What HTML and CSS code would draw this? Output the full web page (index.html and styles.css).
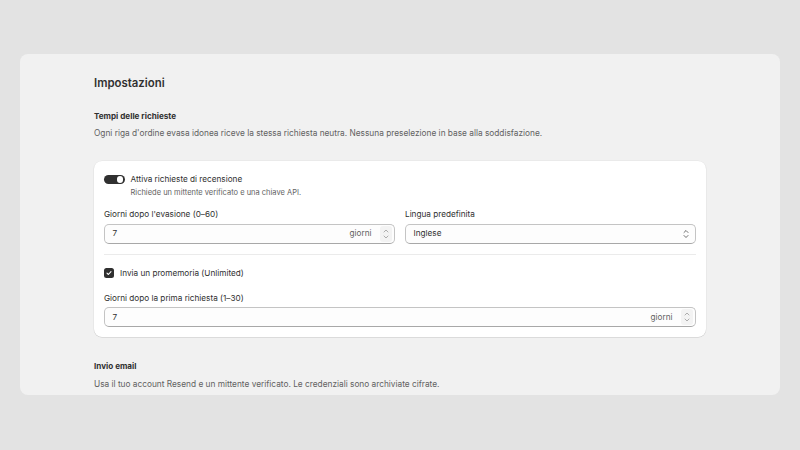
FILE: index.html
```html
<!DOCTYPE html>
<html lang="it">
<head>
    <meta charset="UTF-8">
    <meta name="viewport" content="width=device-width, initial-scale=1.0">
    <title>Impostazioni</title>
    <link rel="stylesheet" href="styles.css">
</head>
<body>
    <div class="panel">
        <h1 class="page-title">Impostazioni</h1>

        <section class="section">
            <h2 class="section-title">Tempi delle richieste</h2>
            <p class="section-desc">Ogni riga d'ordine evasa idonea riceve la stessa richiesta neutra. Nessuna preselezione in base alla soddisfazione.</p>

            <div class="card">
                <div class="toggle-row">
                    <span class="toggle"><span class="knob"></span></span>
                    <div>
                        <div class="toggle-label">Attiva richieste di recensione</div>
                        <div class="help">Richiede un mittente verificato e una chiave API.</div>
                    </div>
                </div>

                <div class="field-grid">
                    <div class="field">
                        <label>Giorni dopo l'evasione (0–60)</label>
                        <div class="input">
                            <span class="value">7</span>
                            <span class="suffix">giorni</span>
                            <span class="stepper">
                                <svg width="8" height="14" viewBox="0 0 8 14"><path d="M2 5 4 3 6 5M2 9 4 11 6 9" fill="none" stroke="#9a9a9a" stroke-width="0.8" stroke-linecap="round" stroke-linejoin="round"/></svg>
                            </span>
                        </div>
                    </div>
                    <div class="field">
                        <label>Lingua predefinita</label>
                        <div class="input">
                            <span class="value">Inglese</span>
                            <svg class="select-icon" width="8" height="12" viewBox="0 0 8 12"><path d="M2 4.5 4 2.5 6 4.5M2 7.5 4 9.5 6 7.5" fill="none" stroke="#4a4a4a" stroke-width="0.8" stroke-linecap="round" stroke-linejoin="round"/></svg>
                        </div>
                    </div>
                </div>

                <hr class="divider">

                <div class="check-row">
                    <span class="checkbox">
                        <svg width="8" height="8" viewBox="0 0 8 8"><path d="M2 4.2 3.4 5.5 6 2.6" fill="none" stroke="#fff" stroke-width="1.1" stroke-linecap="round" stroke-linejoin="round"/></svg>
                    </span>
                    <span>Invia un promemoria (Unlimited)</span>
                </div>

                <div class="field field-wide">
                    <label>Giorni dopo la prima richiesta (1–30)</label>
                    <div class="input">
                        <span class="value">7</span>
                        <span class="suffix">giorni</span>
                        <span class="stepper">
                            <svg width="8" height="14" viewBox="0 0 8 14"><path d="M2 5 4 3 6 5M2 9 4 11 6 9" fill="none" stroke="#9a9a9a" stroke-width="0.8" stroke-linecap="round" stroke-linejoin="round"/></svg>
                        </span>
                    </div>
                </div>
            </div>
        </section>

        <section class="section section-email">
            <h2 class="section-title">Invio email</h2>
            <p class="section-desc">Usa il tuo account Resend e un mittente verificato. Le credenziali sono archiviate cifrate.</p>
        </section>
    </div>
</body>
</html>
```

FILE: styles.css
```css
:root {
    --text: #303030;
    --muted: #616161;
    --page: #e3e3e3;
    --panel: #f1f1f1;
    --border: #c4c4c4;
}
* {
    box-sizing: border-box;
}
body {
    margin: 0;
    padding: 54px 20px 0;
    background: var(--page);
    font-family: 'Inter', 'Noto Sans', sans-serif;
    font-size: 8.2px;
    line-height: 12.5px;
    color: var(--text);
}
.panel {
    height: 341px;
    overflow: hidden;
    background: var(--panel);
    border-radius: 8px;
    padding: 21px 74px 0;
}
.page-title {
    margin: 0;
    font-size: 11.4px;
    line-height: 16px;
    font-weight: 600;
}
.section {
    margin-top: 18.75px;
}
.section-title {
    margin: 0;
    font-size: 8.125px;
    line-height: 12.5px;
    font-weight: 650;
}
.section-desc {
    margin: 5px 0 0;
    font-size: 8.3px;
    color: var(--muted);
}
.card {
    margin-top: 21.5px;
    background: #fff;
    border-radius: 8px;
    box-shadow: 0 0.6px 0 rgba(0,0,0,0.13), 0 0 0 0.6px rgba(0,0,0,0.06);
    padding: 11.75px 10px 10px;
}
.toggle-row {
    display: flex;
    align-items: flex-start;
    gap: 6px;
}
.toggle {
    flex: none;
    width: 20.5px;
    height: 9.5px;
    margin-top: 1.8px;
    border-radius: 5px;
    background: #303030;
    display: flex;
    align-items: center;
    justify-content: flex-end;
    padding-right: 1.6px;
}
.knob {
    width: 6.4px;
    height: 6.4px;
    border-radius: 50%;
    background: #fff;
}
.help {
    margin-top: 2.75px;
    font-size: 7.5px;
    line-height: 10px;
    color: var(--muted);
}
.field-grid {
    display: grid;
    grid-template-columns: 1fr 1fr;
    gap: 10px;
    margin-top: 9.75px;
}
.field label {
    display: block;
    margin-bottom: 3px;
}
.input {
    height: 20px;
    display: flex;
    align-items: center;
    border: 0.7px solid var(--border);
    border-bottom-color: #a8a8a8;
    border-radius: 5px;
    padding: 0 2.5px 0 7.5px;
    background: #fdfdfd;
}
.value {
    flex: 1;
}
.suffix {
    color: var(--muted);
    margin-right: 8px;
}
.stepper {
    display: flex;
    align-items: center;
    justify-content: center;
    width: 12px;
    height: 16px;
    border-radius: 3px;
    background: #f3f3f3;
}
.select-icon {
    margin-right: 3px;
}
.divider {
    border: 0;
    border-top: 1px solid #ebebeb;
    margin: 10.25px 0 0;
}
.check-row {
    display: flex;
    align-items: center;
    gap: 6px;
    margin-top: 12px;
}
.checkbox {
    width: 10px;
    height: 10px;
    border-radius: 2.5px;
    background: #303030;
    display: flex;
    align-items: center;
    justify-content: center;
}
.field-wide {
    margin-top: 12.5px;
}
.section-email {
    margin-top: 22.8px;
}
```
